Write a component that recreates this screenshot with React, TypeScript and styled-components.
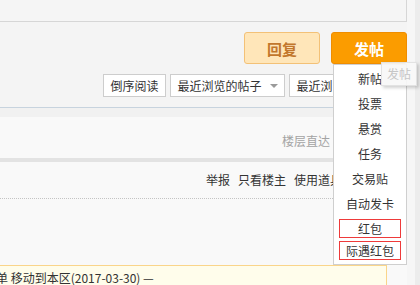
import styled, { createGlobalStyle } from 'styled-components';

const GlobalStyle = createGlobalStyle`
	html, body {
		margin: 0;
		padding: 0;
		background: #f4f4f4;
	}
	body {
		font-family: "Noto Sans CJK SC", "Noto Sans", sans-serif;
		font-size: 12px;
		color: #333;
	}
	* {
		box-sizing: border-box;
	}
`;

const postMenu = ['新帖', '投票', '悬赏', '任务', '交易贴', '自动发卡'];
const redMenu = ['红包', '际遇红包'];

export default function App() {
	return (
		<>
			<GlobalStyle />
			<Page>
				<Main>
					<TopBox />
					<ActionRow>
						<ReplyButton>回复</ReplyButton>
						<PostWrap>
							<PostButton>发帖</PostButton>
							<Menu>
								{postMenu.map((item) => (
									<MenuItem key={item}>{item}</MenuItem>
								))}
								{redMenu.map((item) => (
									<MenuItem key={item} marked>
										{item}
									</MenuItem>
								))}
							</Menu>
							<Tip>发帖</Tip>
						</PostWrap>
					</ActionRow>
					<FilterRow>
						<FilterButton width={63}>倒序阅读</FilterButton>
						<FilterButton width={115}>
							最近浏览的帖子
							<Caret />
						</FilterButton>
						<FilterButton width={115}>
							最近浏览的版块
							<Caret />
						</FilterButton>
					</FilterRow>
					<Divider />
					<SubHeader />
					<FloorBar>
						<FloorLabel>楼层直达</FloorLabel>
					</FloorBar>
					<Post>
						<PostLinks>
							<PostLink>举报</PostLink>
							<PostLink>只看楼主</PostLink>
							<PostLink>使用道具</PostLink>
						</PostLinks>
						<PostBody />
						<Notice>
							<NoticeCut>单</NoticeCut> 移动到本区(2017-03-30) —
						</Notice>
					</Post>
				</Main>
				<Aside>
					<Gutter />
					<Track />
				</Aside>
			</Page>
		</>
	);
}

const Page = styled.div`
	display: flex;
	width: 420px;
	height: 285px;
	overflow: hidden;
	position: relative;
`;

const Main = styled.div`
	width: 407px;
	flex: none;
	position: relative;
`;

const Aside = styled.div`
	flex: 1;
	display: flex;
`;

const Gutter = styled.div`
	width: 8px;
	background: #f6f6f6;
`;

const Track = styled.div`
	flex: 1;
	background: #ececec;
`;

const TopBox = styled.div`
	height: 22px;
	margin-left: -1px;
	background: #f5f5f5;
	border: 1px solid #d6d6d6;
	border-top: 0;
`;

const ActionRow = styled.div`
	display: flex;
	justify-content: flex-end;
	gap: 11px;
	padding-top: 10px;
`;

const BaseButton = styled.div`
	width: 76px;
	height: 32px;
	border-radius: 3px;
	display: flex;
	align-items: center;
	justify-content: center;
	font-size: 15px;
	font-weight: bold;
	cursor: pointer;
`;

const ReplyButton = styled(BaseButton)`
	background: #ffe6b9;
	border: 1px solid #f3c177;
	color: #c2772c;
`;

const PostWrap = styled.div`
	position: relative;
`;

const PostButton = styled(BaseButton)`
	background: #fb9c00;
	border: 1px solid #ef8d00;
	color: #fff;
`;

const Menu = styled.ul`
	position: absolute;
	top: 32px;
	right: 0;
	width: 74px;
	margin: 0;
	padding: 1px 0;
	list-style: none;
	background: #fff;
	border: 1px solid #cfcfcf;
	z-index: 2;
`;

const MenuItem = styled.li<{ marked?: boolean }>`
	height: 25px;
	line-height: 25px;
	text-align: center;
	color: #333;
	${({ marked }) =>
		marked &&
		`
		height: 19px;
		line-height: 17px;
		margin: 3px 5px;
		border: 1px solid #ee3a3a;
	`}
`;

const Tip = styled.div`
	position: absolute;
	left: 50px;
	top: 30px;
	width: 36px;
	height: 24px;
	line-height: 22px;
	text-align: center;
	color: #c6c6c6;
	background: rgba(247, 247, 247, 0.92);
	border: 1px solid #e2e2e2;
	box-shadow: 2px 2px 3px rgba(0, 0, 0, 0.18);
	z-index: 3;
`;

const FilterRow = styled.div`
	display: flex;
	justify-content: flex-end;
	gap: 4px;
	padding-right: 3px;
	margin-top: 10px;
`;

const FilterButton = styled.div<{ width: number }>`
	width: ${({ width }) => width}px;
	height: 23px;
	display: flex;
	align-items: center;
	justify-content: center;
	gap: 8px;
	background: #fff;
	border: 1px solid #cdcdcd;
	color: #333;
	white-space: nowrap;
`;

const Caret = styled.span`
	width: 0;
	height: 0;
	border-left: 4px solid transparent;
	border-right: 4px solid transparent;
	border-top: 4px solid #9a9a9a;
`;

const Divider = styled.div`
	margin-top: 10px;
	height: 1px;
	background: #c7d3de;
`;

const SubHeader = styled.div`
	height: 9px;
	background: #f1f1f1;
`;

const FloorBar = styled.div`
	height: 41px;
	display: flex;
	align-items: flex-end;
	justify-content: flex-end;
	padding: 0 77px 9px 0;
	background: #f9f9f9;
`;

const FloorLabel = styled.span`
	line-height: 16px;
	color: #a3a3a3;
`;

const Post = styled.div`
	background: #f9f9f9;
	border-top: 4px solid #e3e3e3;
	padding-bottom: 40px;
`;

const PostLinks = styled.div`
	display: flex;
	justify-content: flex-end;
	gap: 8px;
	padding: 10px 65px 10px 0;
	line-height: 16px;
	border-bottom: 1px dotted #c4c4c4;
`;

const PostLink = styled.span`
	color: #333;
	cursor: pointer;
`;

const PostBody = styled.div`
	height: 66px;
`;

const Notice = styled.div`
	margin: 0 20px 0 -1px;
	padding: 4px 0 6px 0;
	line-height: 16px;
	background: #fffdeb;
	border: 1px solid #fad58a;
	color: #333;
	white-space: nowrap;
	overflow: hidden;
`;

const NoticeCut = styled.span`
	margin-left: -4px;
`;
